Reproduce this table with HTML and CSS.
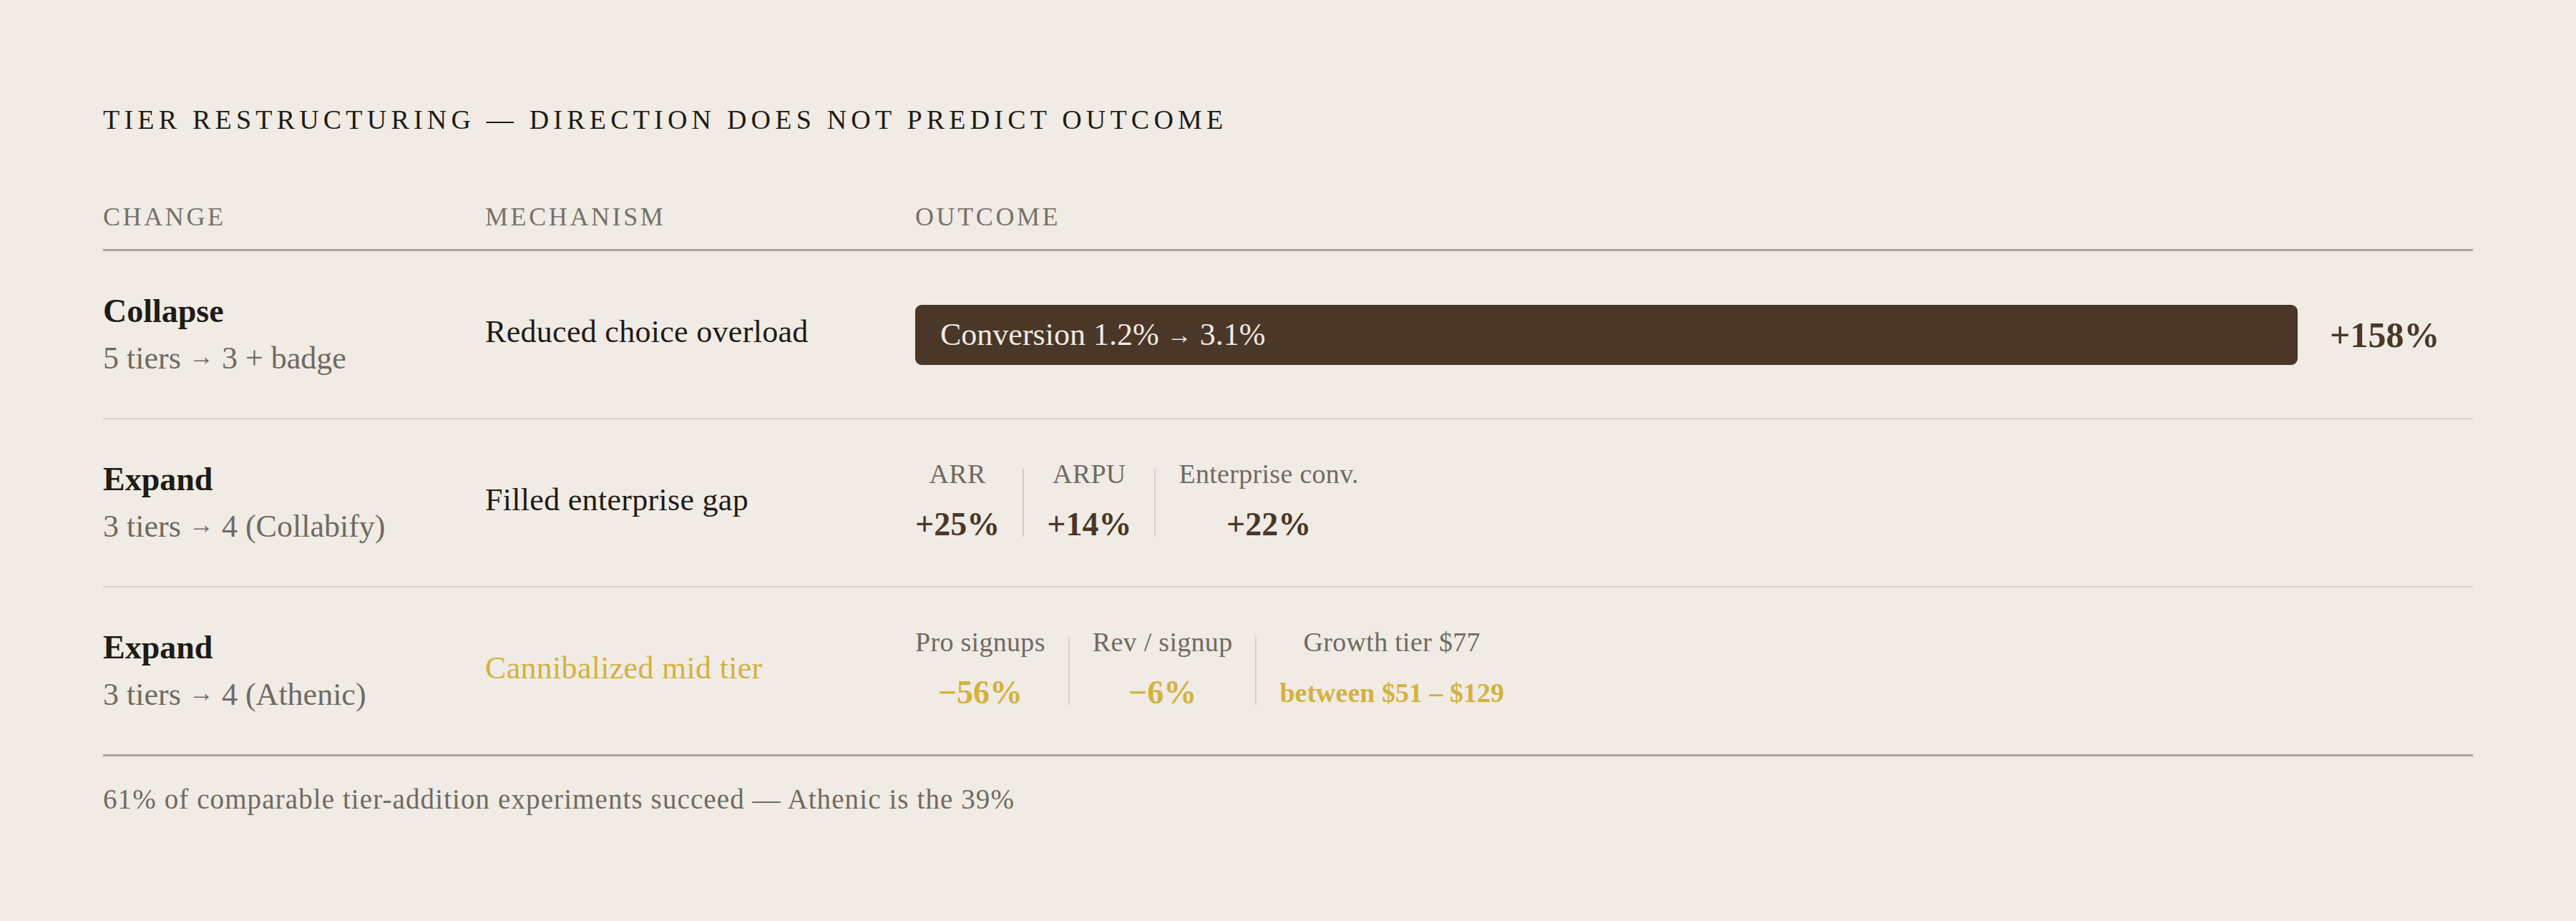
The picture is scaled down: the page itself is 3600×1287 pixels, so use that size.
FILE: index.html
```html
<!DOCTYPE html>
<html lang="en">
<head>
<meta charset="utf-8">
<title>Tier restructuring</title>
<link rel="stylesheet" href="styles.css">
</head>
<body>
<main class="page">
  <h1 class="title">TIER RESTRUCTURING — DIRECTION DOES NOT PREDICT OUTCOME</h1>
  <div class="table">
    <div class="thead">
      <span class="th">CHANGE</span>
      <span class="th">MECHANISM</span>
      <span class="th">OUTCOME</span>
    </div>

    <div class="row">
      <div class="change">
        <div class="change-name">Collapse</div>
        <div class="change-sub">5 tiers <span class="arrow">→</span> 3 + badge</div>
      </div>
      <div class="mech">Reduced choice overload</div>
      <div class="outcome">
        <div class="bar"><span class="bar-label">Conversion 1.2% <span class="arrow">→</span> 3.1%</span></div>
        <div class="bar-value">+158%</div>
      </div>
    </div>

    <div class="row">
      <div class="change">
        <div class="change-name">Expand</div>
        <div class="change-sub">3 tiers <span class="arrow">→</span> 4 (Collabify)</div>
      </div>
      <div class="mech">Filled enterprise gap</div>
      <div class="outcome">
        <div class="metrics">
          <div class="metric">
            <div class="m-label">ARR</div>
            <div class="m-value">+25%</div>
          </div>
          <div class="divider"></div>
          <div class="metric">
            <div class="m-label">ARPU</div>
            <div class="m-value">+14%</div>
          </div>
          <div class="divider"></div>
          <div class="metric">
            <div class="m-label">Enterprise conv.</div>
            <div class="m-value">+22%</div>
          </div>
        </div>
      </div>
    </div>

    <div class="row row-last">
      <div class="change">
        <div class="change-name">Expand</div>
        <div class="change-sub">3 tiers <span class="arrow">→</span> 4 (Athenic)</div>
      </div>
      <div class="mech mech-warn">Cannibalized mid tier</div>
      <div class="outcome">
        <div class="metrics">
          <div class="metric">
            <div class="m-label">Pro signups</div>
            <div class="m-value m-warn">−56%</div>
          </div>
          <div class="divider"></div>
          <div class="metric">
            <div class="m-label">Rev / signup</div>
            <div class="m-value m-warn">−6%</div>
          </div>
          <div class="divider"></div>
          <div class="metric">
            <div class="m-label">Growth tier $77</div>
            <div class="m-value m-warn m-small">between $51 – $129</div>
          </div>
        </div>
      </div>
    </div>
  </div>
  <p class="footnote">61% of comparable tier-addition experiments succeed — Athenic is the 39%</p>
</main>
</body>
</html>
```

FILE: styles.css
```css
html, body {
  margin: 0;
  padding: 0;
  background: #f0ebe4;
}

body {
  font-family: "Liberation Serif", "Times New Roman", serif;
  color: #1f1b16;
}

.page {
  padding: 148px 144px 0 144px;
}

.title {
  margin: 0;
  font-size: 38px;
  line-height: 38px;
  font-weight: 400;
  letter-spacing: 6.2px;
  color: #1f1b16;
}

.table {
  margin-top: 99px;
}

.thead {
  display: grid;
  grid-template-columns: 534px 601px 1fr;
  padding-bottom: 27px;
  border-bottom: 3px solid #aaa59b;
}

.th {
  font-size: 36px;
  line-height: 36px;
  letter-spacing: 3.6px;
  color: #75716a;
}

.row {
  display: grid;
  grid-template-columns: 534px 601px 1fr;
  align-items: center;
  height: 233px;
  border-bottom: 2px solid #d9d4cc;
}

.row-last {
  border-bottom: 3px solid #aaa59b;
}

.change-name {
  font-size: 46px;
  line-height: 64px;
  font-weight: 700;
  color: #1f1b16;
}

.change-sub {
  font-size: 44px;
  line-height: 64px;
  color: #6f6a62;
}

.arrow {
  font-size: 0.8em;
  vertical-align: 0.14em;
}

.mech {
  font-size: 44px;
  line-height: 64px;
  letter-spacing: 0.3px;
  padding-bottom: 8px;
  color: #1f1b16;
}

.mech-warn {
  color: #d4b140;
}

.outcome {
  display: flex;
  align-items: center;
}

.bar {
  flex: 1;
  height: 84px;
  box-sizing: border-box;
  display: flex;
  align-items: center;
  padding-left: 35px;
  background: #4a3728;
  border-radius: 9px;
  color: #f0ebe4;
  font-size: 44px;
}

.bar-label {
  white-space: nowrap;
}

.bar .arrow {
  vertical-align: 0.06em;
}

.bar-value {
  width: 200px;
  margin-left: 45px;
  font-size: 50px;
  font-weight: 700;
  color: #4a3728;
}

.metrics {
  display: flex;
  align-items: center;
}

.metric {
  display: flex;
  flex-direction: column;
  align-items: center;
  padding: 0 32px 6px 32px;
  text-align: center;
}

.metric:first-child {
  padding-left: 0;
}

.divider {
  width: 2px;
  height: 95px;
  background: #d3cec6;
}

.m-label {
  font-size: 38px;
  line-height: 40px;
  margin-bottom: 26px;
  letter-spacing: 0.3px;
  color: #6f6a62;
  white-space: nowrap;
}

.m-value {
  font-size: 46px;
  line-height: 50px;
  font-weight: 700;
  color: #4a3728;
  white-space: nowrap;
}

.m-warn {
  color: #d4b140;
}

.m-small {
  font-size: 38px;
}

.footnote {
  margin: 37px 0 0 0;
  font-size: 39px;
  line-height: 45px;
  letter-spacing: 1.1px;
  color: #6f6a62;
}
```
